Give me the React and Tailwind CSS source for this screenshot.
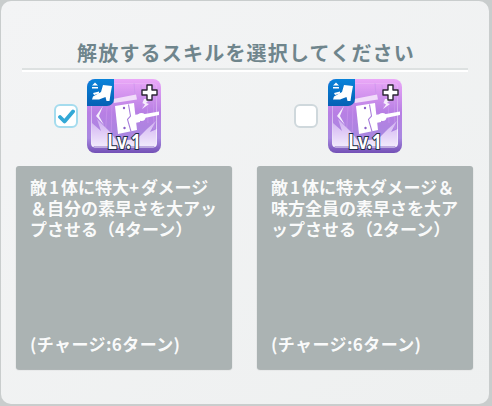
import React from "react";

function SkillIcon({ uid }) {
  return (
    <div className="relative size-[74px]">
      <svg width="74" height="74" viewBox="0 0 74 74" className="block rounded-[8px]">
        <defs>
          <linearGradient id={`bg${uid}`} x1="0" y1="0" x2="0" y2="1">
            <stop offset="0" stopColor="#eba8f8" />
            <stop offset="0.45" stopColor="#b87fe4" />
            <stop offset="0.8" stopColor="#a888e0" />
            <stop offset="1" stopColor="#7350b6" />
          </linearGradient>
          <linearGradient id={`burst${uid}`} x1="0" y1="0" x2="0" y2="1">
            <stop offset="0" stopColor="#cfaef0" />
            <stop offset="1" stopColor="#f1e9fc" />
          </linearGradient>
          <linearGradient id={`frame${uid}`} x1="0" y1="0" x2="0" y2="1">
            <stop offset="0.2" stopColor="#ffffff" stopOpacity="0.15" />
            <stop offset="1" stopColor="#ffffff" stopOpacity="0.9" />
          </linearGradient>
          <linearGradient id={`blue${uid}`} x1="0" y1="0" x2="0" y2="1">
            <stop offset="0" stopColor="#0a83da" />
            <stop offset="1" stopColor="#0560b4" />
          </linearGradient>
        </defs>
        <rect width="74" height="74" fill={`url(#bg${uid})`} />
        <g stroke="#c995ec" strokeWidth="1" opacity="0.7">
          <path d="M20 28L18 62M25 24L24 62M54 6L56 30M60 20L61 44M66 6L67 50M47 4L48 16" />
        </g>
        <path d="M5 67 L5 44 L14 52 L10 40 L24 54 L30 62 L50 60 L60 50 L69 42 L63 53 L70 50 L69 67Z" fill={`url(#burst${uid})`} />
        <rect x="4.5" y="4.5" width="65" height="63.5" rx="3" fill="none" stroke={`url(#frame${uid})`} strokeWidth="1" />
        <path d="M16 27L9 37L17 46L12 37Z" fill="#f5eefc" />
        <path d="M26 20L49 15.5L50 20.5L27 24Z" fill="#f1dcfa" />
        <path d="M28 27L47 24L50 51L31 55Z" fill="#ffffff" />
        <path d="M41.5 25.5L43.5 37L40.5 40.5L44 52.5" fill="none" stroke="#a87edc" strokeWidth="1.1" />
        <circle cx="37" cy="29" r="1.2" fill="#8a5fc8" />
        <circle cx="37.5" cy="49" r="1.2" fill="#8a5fc8" />
        <path d="M47 36L53 35V43L48 44Z" fill="#ffffff" />
        <circle cx="54.5" cy="38" r="4" fill="#ffffff" />
        <path d="M55 35.5L72 32.5V36L55 39.5Z" fill="#ffffff" />
        <path d="M57 20L63 20L59 24L62 25L55 30L58 25.5L55.5 24Z" fill="#f6ecfc" />
        <path d="M0 0H27V20A7 7 0 0 1 20 27H0Z" fill={`url(#blue${uid})`} />
        <path d="M5 6.5L8 3.5L11 6.5Z M5 8H11V9.5H5Z M6 14L12 12.5V14.5L7 16Z" fill="#ffffff" />
        <path d="M16 6L25 7L23.5 15L22.5 22H19.5L18.5 18L12 20.5H5L6 17.5L14 13Z" fill="#ffffff" />
        <path d="M60 11V6H65V11H70V16H65V21H60V16H55V11Z" fill="#ffffff" stroke="#2b2433" strokeWidth="1.4" strokeLinejoin="round" />
      </svg>
      <span className="absolute inset-x-0 bottom-[2px] text-center font-['Noto_Sans',sans-serif] text-[21px] leading-[20px] font-bold text-white scale-x-[0.82] [-webkit-text-stroke:2.2px_#1d2b44] [paint-order:stroke_fill]">
        Lv.1
      </span>
    </div>
  );
}

function Option({ uid, checked, lines, boxOffset, checkOffset }) {
  return (
    <div className="flex flex-col w-[216px]">
      <div className="flex items-center h-[74px]">
        <div className={`flex items-center justify-center size-6 rounded-[6px] border-2 bg-white ${checkOffset} ${checked ? "border-[#a5dcee]" : "border-[#cfd8dc]"}`}>
          {checked && (
            <svg width="17" height="15" viewBox="0 0 17 15">
              <path d="M2 8L6.5 12.5L15 2.5" fill="none" stroke="#33a8d6" strokeWidth="3.8" strokeLinecap="round" strokeLinejoin="round" />
            </svg>
          )}
        </div>
        <div className={boxOffset}>
          <SkillIcon uid={uid} />
        </div>
      </div>
      <div className="mt-[13px] h-[203px] rounded-[3px] bg-[#abb3b3] shadow-[0_1px_1px_rgba(120,130,130,0.6)] pl-[14px] pt-[10px] pb-[15px] flex flex-col justify-between text-[17px] leading-[21px] font-semibold text-white/95">
        <div>
          {lines.map((l, i) => (
            <div key={i} className="whitespace-nowrap">{l}</div>
          ))}
        </div>
        <div className="whitespace-nowrap tracking-[0.4px]">(チャージ:6ターン)</div>
      </div>
    </div>
  );
}

export default function App() {
  return (
    <div className="w-[492px] h-[406px] bg-[#c9cdcd] pt-px pb-[2px] pr-[3px] pl-px font-['Noto_Sans_CJK_JP','Noto_Sans',sans-serif] overflow-hidden">
      <div className="h-full rounded-[10px] bg-gradient-to-br from-[#f3f4f5] to-[#eef0f0] pt-[37px] px-[15px]">
        <h1 className="text-center text-[20px] leading-[29px] tracking-[1.2px] font-bold text-[#6f858c] pl-[2px]">
          解放するスキルを選択してください
        </h1>
        <div className="mx-[6px] mt-[1px] h-1 border-t-2 border-[#dde1e1] border-b-2 border-b-white" />
        <div className="mt-[7px] flex gap-[25px]">
          <Option
            uid="a"
            checked
            checkOffset="ml-[38px]"
            boxOffset="ml-[9px]"
            lines={[
              <>敵<span className="px-[2px]">1</span>体に特大<span className="pr-[2px]">+</span>ダメージ</>,
              "＆自分の素早さを大アッ",
              "プさせる（4ターン）",
            ]}
          />
          <Option
            uid="b"
            checkOffset="ml-[37px]"
            boxOffset="ml-[10px]"
            lines={[
              <>敵<span className="px-[2px]">1</span>体に特大ダメージ＆</>,
              "味方全員の素早さを大ア",
              "ップさせる（2ターン）",
            ]}
          />
        </div>
      </div>
    </div>
  );
}
